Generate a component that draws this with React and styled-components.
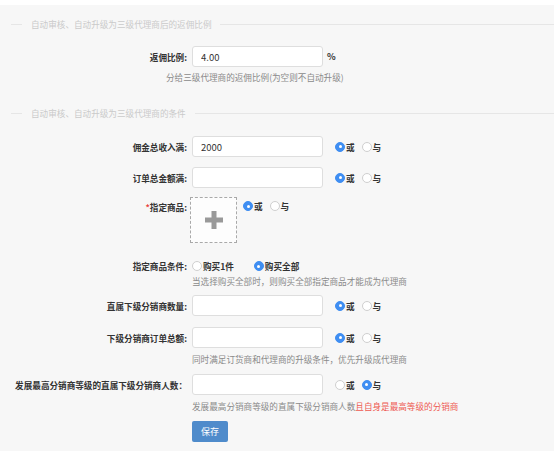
import React from "react";
import styled, { createGlobalStyle } from "styled-components";

const Global = createGlobalStyle`
  html, body {
    margin: 0;
    padding: 0;
    background: #ffffff;
    font-family: "Noto Sans CJK SC", "Noto Sans", sans-serif;
  }
`;

const Panel = styled.div`
  margin-top: 5px;
  background: #f7f7f7;
  padding: 13px 0 9px;
`;

const Legend = styled.div`
  display: flex;
  align-items: center;
  height: 12px;
  padding-left: 11px;
  margin-top: ${(p) => p.$top || 0}px;
  font-size: 8.6px;
  color: #cacaca;
  &::before {
    content: "";
    width: 11px;
    height: 1px;
    background: #e6e6e6;
    margin-right: 9px;
  }
  &::after {
    content: "";
    flex: 1;
    height: 1px;
    background: #e6e6e6;
    margin-left: 9px;
  }
`;

const Form = styled.div`
  display: grid;
  grid-template-columns: 187px 1fr;
  column-gap: 5px;
  align-items: center;
`;

const Label = styled.div`
  text-align: right;
  font-size: 8.6px;
  font-weight: bold;
  color: #333;
  line-height: 12px;
  white-space: nowrap;
  margin-top: ${(p) => p.$top || 0}px;
  align-self: ${(p) => (p.$alignTop ? "start" : "center")};
  padding-top: ${(p) => p.$padTop || 0}px;
`;

const Star = styled.span`
  color: #e8463e;
`;

const Control = styled.div`
  display: flex;
  align-items: ${(p) => (p.$alignTop ? "flex-start" : "center")};
  margin-top: ${(p) => p.$top || 0}px;
`;

const Input = styled.input`
  box-sizing: border-box;
  width: 131px;
  height: 21px;
  border: 1px solid #dedede;
  border-radius: 3px;
  background: #fff;
  padding: 0 8px;
  font-family: inherit;
  font-size: 9.5px;
  color: #333;
  outline: none;
`;

const Unit = styled.span`
  font-size: 9px;
  font-weight: bold;
  color: #333;
  margin-left: 4px;
`;

const Help = styled.div`
  grid-column: 2;
  font-size: 8.6px;
  line-height: 12px;
  color: #8a8a8a;
  white-space: nowrap;
  margin-top: ${(p) => p.$top || 0}px;
  margin-left: ${(p) => p.$shift || 0}px;
`;

const Red = styled.span`
  color: #ee5a52;
`;

const Radios = styled.div`
  display: flex;
  align-items: center;
  margin-left: ${(p) => p.$left ?? 12}px;
  margin-top: ${(p) => p.$top || 0}px;
  gap: ${(p) => p.$gap || 7}px;
`;

const Option = styled.label`
  display: flex;
  align-items: center;
  font-size: 8.6px;
  font-weight: bold;
  color: #333;
  line-height: 12px;
`;

const Dot = styled.span`
  box-sizing: border-box;
  width: 10px;
  height: 10px;
  border-radius: 50%;
  margin-right: 1px;
  background: ${(p) => (p.$on ? "#3f8ef2" : "#fff")};
  border: 1px solid ${(p) => (p.$on ? "#3f8ef2" : "#cfcfcf")};
  display: flex;
  align-items: center;
  justify-content: center;
  &::after {
    content: "";
    width: 3px;
    height: 3px;
    border-radius: 50%;
    background: ${(p) => (p.$on ? "#fff" : "transparent")};
  }
`;

const Upload = styled.div`
  box-sizing: border-box;
  width: 47px;
  height: 46px;
  margin-left: -2px;
  border: 1px dashed #a9a9a9;
  background: #fdfdfd;
  display: flex;
  align-items: center;
  justify-content: center;
`;

const SaveButton = styled.button`
  width: 36px;
  height: 21px;
  border: none;
  border-radius: 2px;
  background: #4f8bcb;
  color: #fff;
  font-family: inherit;
  font-size: 9px;
  padding: 0;
`;

function Radio({ on, children }) {
  return (
    <Option>
      <Dot $on={on} />
      {children}
    </Option>
  );
}

function OrAnd({ and, left, top }) {
  return (
    <Radios $left={left} $top={top}>
      <Radio on={!and}>或</Radio>
      <Radio on={and}>与</Radio>
    </Radios>
  );
}

export default function App() {
  return (
    <>
      <Global />
      <Panel>
        <Legend>自动审核、自动升级为三级代理商后的返佣比例</Legend>
        <Form>
          <Label $top={16}>返佣比例:</Label>
          <Control $top={16}>
            <Input defaultValue="4.00" />
            <Unit>%</Unit>
          </Control>
          <Help $top={4} $shift={-26}>
            分给三级代理商的返佣比例(为空则不自动升级)
          </Help>
        </Form>

        <Legend $top={24}>自动审核、自动升级为三级代理商的条件</Legend>
        <Form>
          <Label $top={17}>佣金总收入满:</Label>
          <Control $top={17}>
            <Input defaultValue="2000" />
            <OrAnd />
          </Control>

          <Label $top={10}>订单总金额满:</Label>
          <Control $top={10}>
            <Input />
            <OrAnd />
          </Control>

          <Label $top={9} $alignTop $padTop={4}>
            <Star>*</Star>指定商品:
          </Label>
          <Control $top={9} $alignTop>
            <Upload>
              <svg width="18" height="18" viewBox="0 0 18 18">
                <rect x="6.5" y="0" width="5" height="18" fill="#999" />
                <rect x="0" y="6.5" width="18" height="5" fill="#999" />
              </svg>
            </Upload>
            <OrAnd left={6} top={3} />
          </Control>

          <Label $top={17}>指定商品条件:</Label>
          <Control $top={17}>
            <Radios $left={0} $gap={20}>
              <Radio>购买1件</Radio>
              <Radio on>购买全部</Radio>
            </Radios>
          </Control>
          <Help $top={3}>当选择购买全部时，则购买全部指定商品才能成为代理商</Help>

          <Label $top={8}>直属下级分销商数量:</Label>
          <Control $top={8}>
            <Input />
            <OrAnd />
          </Control>

          <Label $top={11}>下级分销商订单总额:</Label>
          <Control $top={11}>
            <Input />
            <OrAnd />
          </Control>
          <Help $top={5}>同时满足订货商和代理商的升级条件，优先升级成代理商</Help>

          <Label $top={9}>发展最高分销商等级的直属下级分销商人数：</Label>
          <Control $top={9}>
            <Input />
            <OrAnd and />
          </Control>
          <Help $top={5}>
            发展最高分销商等级的直属下级分销商人数<Red>且自身是最高等级的分销商</Red>
          </Help>

          <div />
          <Control $top={9}>
            <SaveButton>保存</SaveButton>
          </Control>
        </Form>
      </Panel>
    </>
  );
}
